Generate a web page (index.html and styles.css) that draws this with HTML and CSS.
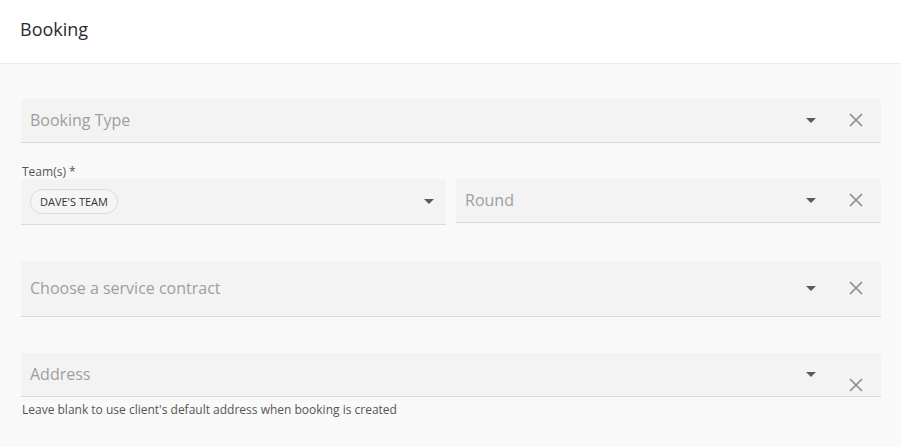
FILE: index.html
```html
<!DOCTYPE html>
<html lang="en">
<head>
	<meta charset="UTF-8">
	<title>Booking</title>
	<link rel="stylesheet" href="styles.css">
</head>
<body>
	<div class="header">Booking</div>
	<div class="content">
		<!-- booking type -->
		<div class="field">
			<span class="placeholder">Booking Type</span>
			<span class="caret"></span>
			<svg class="clear" viewBox="0 0 14 14"><path d="M1 1L13 13M13 1L1 13"/></svg>
		</div>

		<!-- teams + round -->
		<div class="row">
			<div class="col">
				<div class="label">Team(s) *</div>
				<div class="field team">
					<span class="chip">DAVE'S TEAM</span>
					<span class="caret"></span>
				</div>
			</div>
			<div class="col round">
				<div class="field">
					<span class="placeholder">Round</span>
					<span class="caret"></span>
					<svg class="clear" viewBox="0 0 14 14"><path d="M1 1L13 13M13 1L1 13"/></svg>
				</div>
			</div>
		</div>

		<div class="field tall">
			<span class="placeholder">Choose a service contract</span>
			<span class="caret"></span>
			<svg class="clear" viewBox="0 0 14 14"><path d="M1 1L13 13M13 1L1 13"/></svg>
		</div>

		<div class="field address">
			<span class="placeholder">Address</span>
			<span class="caret"></span>
			<svg class="clear low" viewBox="0 0 14 14"><path d="M1 1L13 13M13 1L1 13"/></svg>
		</div>
		<div class="hint">Leave blank to use client's default address when booking is created</div>
	</div>
</body>
</html>
```

FILE: styles.css
```css
*{padding:0;margin:0;box-sizing:border-box;}
body{background:#f9f9f9;font-family:"Open Sans","Liberation Sans",sans-serif;color:#333;}
.header{height:64px;background:#fff;border-bottom:1px solid #ececec;padding:17px 20px 0;font-size:18px;color:#2b2b2b;}
.content{padding:35px 20px 0 21px;}
.field{display:flex;align-items:center;height:44px;background:#f3f3f3;border-bottom:1px solid #d9d9d9;border-radius:3px 3px 0 0;padding:0 18px 1px 9px;}
.field .placeholder{flex:1;font-size:16px;color:#9e9e9e;}
.caret{width:0;height:0;border-left:5px solid transparent;border-right:5px solid transparent;border-top:5px solid #5a5a5a;margin-right:33px;}
.clear{width:14px;height:14px;}
.clear path{stroke:#8a8a8a;stroke-width:1.6;fill:none;}
.clear.low{margin-top:22px;}
.row{display:flex;gap:10px;margin-top:22px;align-items:flex-start;}
.col{flex:1;}
.col.round{padding-top:14px;}
.label{font-size:12px;color:#555;padding-left:1px;height:14px;line-height:14px;}
.field.team{height:46px;padding-right:12px;justify-content:space-between;}
.field.team .caret{margin-right:0;}
.chip{display:inline-block;height:25px;line-height:23px;border:1px solid #dcdcdc;border-radius:13px;padding:0 9px;font-size:11px;color:#333;background:#f5f5f5;}
.field.tall{height:56px;margin-top:36px;}
.field.address{margin-top:36px;}
.hint{font-size:12px;color:#555;padding:4px 0 0 1px;}
```
